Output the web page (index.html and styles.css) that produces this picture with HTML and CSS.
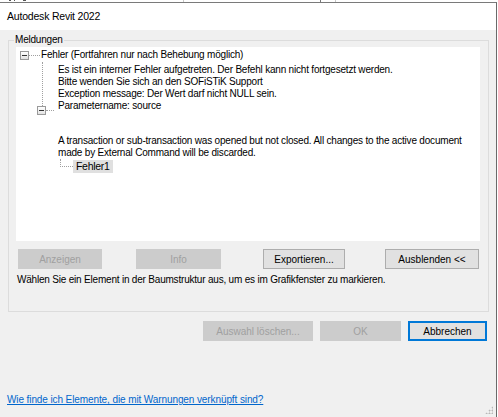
FILE: index.html
```html
<!DOCTYPE html>
<html lang="de">
<head>
<meta charset="utf-8">
<title>Autodesk Revit 2022</title>
<link rel="stylesheet" href="styles.css">
</head>
<body>
<div class="behind"><span class="mk m1"></span><span class="mk m2"></span><span class="mk m3"></span><span class="bl b1"></span><span class="bl b2"></span><span class="bl b3"></span></div>
<div class="window">
  <div class="titlebar">Autodesk Revit 2022</div>
  <div class="client">
    <fieldset class="group">
      <legend class="legend">Meldungen</legend>
      <div class="tree">
        <div class="row root">
          <span class="exp"><span class="minus"></span></span>
          <span class="hdot w10"></span>
          <span class="label">Fehler (Fortfahren nur nach Behebung möglich)</span>
        </div>
        <div class="kids">
          <div class="line">Es ist ein interner Fehler aufgetreten. Der Befehl kann nicht fortgesetzt werden.</div>
          <div class="line">Bitte wenden Sie sich an den SOFiSTiK Support</div>
          <div class="line">Exception message: Der Wert darf nicht NULL sein.</div>
          <div class="line">Parametername: source</div>
        </div>
        <div class="row node2">
          <span class="exp"><span class="minus"></span></span>
          <span class="hdot w8"></span>
        </div>
        <div class="kids2">
          <div class="line">A transaction or sub-transaction was opened but not closed. All changes to the active document</div>
          <div class="line">made by External Command will be discarded.</div>
        </div>
        <div class="row leaf">
          <span class="ell"></span>
          <span class="sel">Fehler1</span>
        </div>
      </div>
      <div class="btnrow">
        <button class="btn dis b-anz">Anzeigen</button>
        <button class="btn dis b-info">Info</button>
        <button class="btn b-exp">Exportieren...</button>
        <button class="btn b-aus">Ausblenden &lt;&lt;</button>
      </div>
      <p class="hint">Wählen Sie ein Element in der Baumstruktur aus, um es im Grafikfenster zu markieren.</p>
    </fieldset>
    <div class="actions">
      <button class="btn dis b-del">Auswahl löschen...</button>
      <button class="btn dis b-ok">OK</button>
      <button class="btn def b-cancel">Abbrechen</button>
    </div>
    <div class="footer">
      <a class="link" href="#">Wie finde ich Elemente, die mit Warnungen verknüpft sind?</a>
      <span class="grip"></span>
    </div>
  </div>
</div>
</body>
</html>
```

FILE: styles.css
```css
* { box-sizing: border-box; }
html, body { margin: 0; padding: 0; }
body {
  width: 498px;
  height: 417px;
  overflow: hidden;
  background: #ffffff;
  font-family: "Liberation Sans", Arial, sans-serif;
  color: #000;
}
.behind {
  height: 2px;
  overflow: hidden;
  position: relative;
  background: #fff;
}
.mk { position: absolute; top: 0; height: 1px; background: #555; }
.m1 { left: 9px; width: 2px; }
.m2 { left: 14px; width: 1px; }
.m3 { left: 23px; width: 3px; }
.bl { position: absolute; top: 0; width: 1px; height: 2px; background: #c8c8c8; }
.b1 { left: 183px; }
.b2 { left: 320px; background: #777; }
.b3 { left: 335px; }
.window {
  width: 497px;
  height: 415px;
  border-top: 1px solid #7a7a7a;
  border-right: 1px solid #6a6a6a;
  display: flex;
  flex-direction: column;
}
.titlebar {
  height: 27px;
  background: #fff;
  font-size: 10.5px;
  letter-spacing: -0.2px;
  line-height: 27px;
  padding-left: 7px;
  color: #000;
}
.client {
  flex: 1;
  background: #f0f0f0;
  display: flex;
  flex-direction: column;
  position: relative;
}
.group {
  margin: 4px 0 0 8px;
  width: 481px;
  border: 1px solid #dcdcdc;
  padding: 1px 8px 24px 7px;
  min-width: 0;
}
.legend {
  font-size: 10px;
  letter-spacing: -0.2px;
  line-height: 12px;
  padding: 0 1px;
  margin-left: -2px;
  color: #000;
}
.tree {
  width: 464px;
  height: 194px;
  background: #fff;
  font-size: 10px;
  letter-spacing: -0.2px;
  color: #000;
  padding-top: 1px;
}
.row { display: flex; align-items: center; }
.root { height: 14px; }
.exp {
  width: 9px;
  height: 9px;
  border: 1px solid #9a9a9a;
  background: linear-gradient(#ffffff, #e2e2e2);
  display: flex;
  align-items: center;
  justify-content: center;
  flex: none;
}
.minus { width: 5px; height: 1px; background: #333; }
.root .exp { margin-left: 4px; }
.hdot { height: 1px; border-top: 1px dotted #a0a0a0; flex: none; }
.w10 { width: 11px; margin-right: 1px; }
.w8 { width: 8px; }
.label { line-height: 14px; white-space: nowrap; }
.kids {
  margin-left: 26px;
  border-left: 1px dotted #a0a0a0;
  padding: 2px 0 0 15px;
  height: 44px;
}
.line { line-height: 12px; height: 12px; white-space: nowrap; }
.node2 { height: 9px; margin-left: 21px; }
.kids2 { padding: 20px 0 0 42px; }
.leaf { margin-left: 44px; align-items: flex-end; height: 14px; }
.ell {
  width: 13px;
  height: 8px;
  border-left: 1px dotted #a0a0a0;
  border-bottom: 1px dotted #a0a0a0;
  margin-bottom: 6px;
  flex: none;
}
.sel {
  background: #e0e0e0;
  padding: 0 3px 0 3px;
  font-size: 10.5px;
  letter-spacing: -0.3px;
  line-height: 13px;
  height: 13px;
}
.btnrow { display: flex; margin-top: 8px; padding-left: 2px; }
.btn {
  font-family: "Liberation Sans", Arial, sans-serif;
  font-size: 10px;
  height: 20px;
  padding: 0;
  border: 1px solid #adadad;
  background: #e1e1e1;
  color: #000;
}
.btn.dis { background: #cccccc; border-color: #cccccc; color: #a0a0a0; }
.b-anz { width: 84px; }
.b-info { width: 85px; margin-left: 34px; }
.b-exp { width: 82px; margin-left: 42px; }
.b-aus { width: 94px; margin-left: 40px; }
.hint {
  margin: 4px 0 0 1px;
  font-size: 10px;
  letter-spacing: -0.2px;
  line-height: 14px;
  white-space: nowrap;
}
.actions {
  display: flex;
  justify-content: flex-end;
  gap: 7px;
  margin-top: 9px;
  padding-right: 9px;
}
.b-del { width: 110px; }
.b-ok { width: 81px; }
.b-cancel { width: 79px; }
.btn.def { border-color: #0078d7; box-shadow: inset 0 0 0 1px #0078d7; }
.footer { flex: 1; display: flex; align-items: flex-end; padding: 0 0 10px 7px; }
.link {
  font-size: 10px;
  letter-spacing: -0.1px;
  line-height: 14px;
  color: #0066cc;
  text-decoration: underline;
}
.grip {
  position: absolute;
  right: 3px;
  bottom: 3px;
  width: 8px;
  height: 8px;
  background:
    radial-gradient(circle, #b8b8b8 0.8px, transparent 1.2px) 0 0 / 3px 3px;
  clip-path: polygon(100% 0, 100% 100%, 0 100%);
}
```
